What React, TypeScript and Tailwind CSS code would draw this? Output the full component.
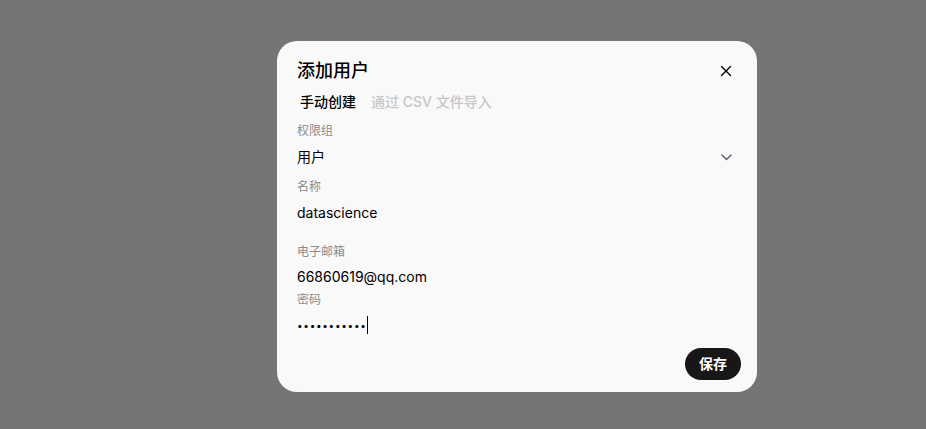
export default function App() {
  return (
    <div
      className="w-[926px] h-[429px] bg-[#757575] flex items-start pl-[277px] pt-[41px]"
      style={{ fontFamily: "Inter, 'Noto Sans CJK SC', sans-serif" }}
    >
      <div className="w-[480px] h-[351px] bg-[#f9f9f9] rounded-[20px] flex flex-col pl-5 pr-4 pt-[16px] pb-3">
        {/* Header */}
        <div className="flex items-center justify-between pr-[9px]">
          <div className="text-[18px] leading-7 font-medium text-black">添加用户</div>
          <svg width="12" height="12" viewBox="0 0 12 12" className="text-black">
            <path d="M1.5 1.5 L10.5 10.5 M10.5 1.5 L1.5 10.5" stroke="currentColor" strokeWidth="1.4" strokeLinecap="round" />
          </svg>
        </div>

        {/* Tabs */}
        <div className="flex items-center gap-[15px] mt-[7px] pl-[3px] text-[14px] leading-5 font-medium">
          <span className="text-black">手动创建</span>
          <span className="text-[#c7c7c7]">通过 CSV 文件导入</span>
        </div>

        {/* Form */}
        <div className="flex flex-col mt-[11px] pr-[9px]">
          <div className="text-[12px] leading-4 text-[#8c8c8c]">权限组</div>
          <div className="flex items-center justify-between mt-2 text-[14px] leading-5 text-black">
            <span>用户</span>
            <svg width="11" height="7" viewBox="0 0 11 7">
              <path d="M1 1 L5.5 5.5 L10 1" stroke="#5f6672" strokeWidth="1.5" fill="none" strokeLinecap="round" strokeLinejoin="round" />
            </svg>
          </div>

          <div className="text-[12px] leading-4 text-[#8c8c8c] mt-3">名称</div>
          <div className="mt-2 text-[14px] leading-5 text-black">datascience</div>

          <div className="text-[12px] leading-4 text-[#8c8c8c] mt-[21px]">电子邮箱</div>
          <div className="mt-[7px] text-[14px] leading-5 text-black">66860619@qq.com</div>

          <div className="text-[12px] leading-4 text-[#8c8c8c] mt-[5px]">密码</div>
          <div className="mt-[7px] flex items-center h-5 text-black">
            <span className="text-[10px] tracking-[0.7px] leading-5">•••••••••••</span>
            <span className="w-px h-[18px] bg-black" />
          </div>
        </div>

        <div className="flex justify-end mt-auto">
          <button className="h-8 px-[14px] rounded-full bg-[#171717] text-white text-[14px] font-semibold leading-5">
            保存
          </button>
        </div>
      </div>
    </div>
  );
}
